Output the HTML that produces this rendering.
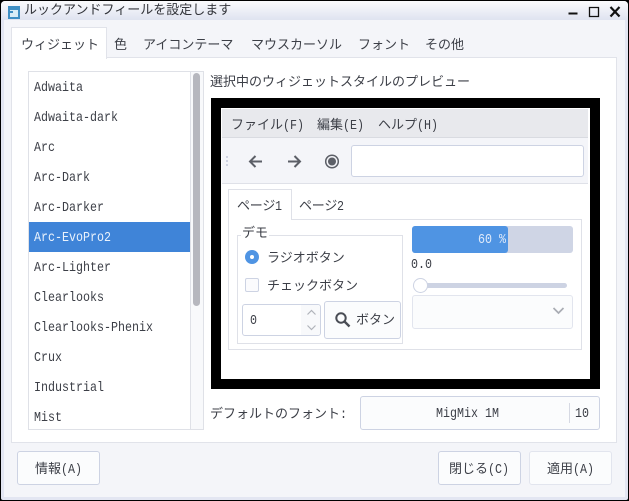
<!DOCTYPE html>
<html lang="ja"><head><meta charset="utf-8"><title>ルックアンドフィールを設定します</title>
<style>
*{box-sizing:border-box}
html,body{margin:0;padding:0;width:629px;height:501px;overflow:hidden;background:#000}
body{position:relative;font:13px/20px "Liberation Sans","Noto Sans CJK JP",sans-serif;color:#3c3f47}
.a,.t{position:absolute}
.t{white-space:nowrap;height:20px;line-height:20px;margin-top:1px}
.m{display:inline-block;font-family:"Liberation Mono",monospace;font-size:14px;letter-spacing:0;transform:scaleX(.833);transform-origin:0 50%}
.btn{position:absolute;background:#fbfcfd;border:1px solid #cdd3e3;border-radius:3px}
.btn.l{border-color:#e2e5ee}
</style></head><body>
<div class="a" style="left:1px;top:1px;width:627px;height:499px;background:#e3e6f2;border-radius:4px 4px 2px 2px"></div>
<div class="a" style="left:1px;top:1px;width:627px;height:19px;background:linear-gradient(#fbfbfd,#dfe3f0);border-radius:4px 4px 0 0"></div>
<div class="a" style="left:4px;top:20px;width:621px;height:477px;background:#f4f5f9"></div>
<div class="a" style="left:8px;top:6px;width:12px;height:13px;background:#3f8fc4"></div>
<div class="a" style="left:10px;top:10px;width:8px;height:7px;background:#d9edf7"></div>
<div class="a" style="left:10px;top:11px;width:3px;height:2px;background:#3f8fc4"></div>
<div class="t" style="left:24px;top:-1px;color:#33353b">ルックアンドフィールを設定します</div>
<svg class="a" style="left:560px;top:0" width="69" height="20" fill="none" stroke="#111"><path d="M8.500 13.500h9" stroke-width="2"/><path d="M29.500 7.500h9v9h-9z" stroke-width="1.300"/><path d="M50.500 7l9 9.500M59.500 7l-9 9.500" stroke-width="2.200"/></svg>

<!-- tabs -->
<div class="a" style="left:11px;top:57px;width:606px;height:386px;background:#fff;border:1px solid #e1e3ea"></div>
<div class="a" style="left:11px;top:27px;width:96px;height:32px;background:#fff;border:1px solid #e1e3ea;border-bottom:0"></div>
<div class="t" style="left:21px;top:34px">ウィジェット</div>
<div class="t" style="left:114px;top:34px">色</div>
<div class="t" style="left:143px;top:34px">アイコンテーマ</div>
<div class="t" style="left:251px;top:34px">マウスカーソル</div>
<div class="t" style="left:358px;top:34px">フォント</div>
<div class="t" style="left:425px;top:34px">その他</div>

<!-- list -->
<div class="a" style="left:28px;top:71px;width:176px;height:359px;background:#fff;border:1px solid #dfe1e7"></div>
<div class="a" style="left:190px;top:72px;width:13px;height:357px;background:#f8f9fb;border-left:1px solid #dfe1e7"></div>
<div class="a" style="left:193px;top:73px;width:7px;height:233px;background:#b6b7be;border-radius:4px"></div>
<div class="a" style="left:29px;top:222px;width:161px;height:30px;background:#3f84d8"></div>
<div class="t m" style="left:34px;top:77px">Adwaita</div>
<div class="t m" style="left:34px;top:107px">Adwaita-dark</div>
<div class="t m" style="left:34px;top:137px">Arc</div>
<div class="t m" style="left:34px;top:167px">Arc-Dark</div>
<div class="t m" style="left:34px;top:197px">Arc-Darker</div>
<div class="t m" style="left:34px;top:227px;color:#eaf2fc">Arc-EvoPro2</div>
<div class="t m" style="left:34px;top:257px">Arc-Lighter</div>
<div class="t m" style="left:34px;top:287px">Clearlooks</div>
<div class="t m" style="left:34px;top:317px">Clearlooks-Phenix</div>
<div class="t m" style="left:34px;top:347px">Crux</div>
<div class="t m" style="left:34px;top:377px">Industrial</div>
<div class="t m" style="left:34px;top:407px">Mist</div>

<div class="t" style="left:210px;top:71px">選択中のウィジェットスタイルのプレビュー</div>

<!-- preview -->
<div class="a" style="left:211px;top:98px;width:389px;height:291px;background:#fff;border:10px solid #000"></div>
<div class="a" style="left:222px;top:109px;width:366px;height:29px;background:#e8e9ed;border-bottom:1px solid #d9dbe1"></div>
<div class="t" style="left:231px;top:114px">ファイル<span class="m">(F)</span></div>
<div class="t" style="left:317px;top:114px">編集<span class="m">(E)</span></div>
<div class="t" style="left:378px;top:114px">ヘルプ<span class="m">(H)</span></div>
<div class="a" style="left:222px;top:138px;width:366px;height:46px;background:#f4f5f9;border-bottom:1px solid #dfe1e8"></div>
<svg class="a" style="left:222px;top:138px" width="130" height="46" fill="none"><path d="M5 18v2M5 22v2M5 26v2" stroke="#cfd3e2" stroke-width="2"/><path d="M40 23.500H28M33.500 18l-5.500 5.500 5.500 5.500M66 23.500h12M72.500 18l5.500 5.500-5.500 5.500" stroke="#5c5f67" stroke-width="2"/><circle cx="110" cy="23.500" r="6.300" stroke="#5c5f67" stroke-width="1.500"/><circle cx="110" cy="23.500" r="4" fill="#5c5f67"/></svg>
<div class="btn" style="left:351px;top:145px;width:233px;height:32px;background:#fff"></div>

<div class="a" style="left:228px;top:219px;width:354px;height:131px;border:1px solid #dfe1e8"></div>
<div class="a" style="left:228px;top:189px;width:64px;height:31px;background:#fff;border:1px solid #dfe1e8;border-bottom:0"></div>
<div class="t" style="left:237px;top:195px;letter-spacing:-.2px">ページ<span class="m">1</span></div>
<div class="t" style="left:299px;top:195px;letter-spacing:-.2px">ページ<span class="m">2</span></div>

<div class="a" style="left:237px;top:235px;width:166px;height:109px;border:1px solid #dfe1e8"></div>
<div class="t" style="left:241px;top:223px;background:#fff;padding:0 1px;height:16px;line-height:18px;overflow:visible">デモ</div>
<div class="a" style="left:245px;top:250px;width:14px;height:14px;border-radius:50%;background:#4f94e3"></div>
<div class="a" style="left:250px;top:255px;width:4px;height:4px;border-radius:50%;background:#fff"></div>
<div class="t" style="left:267px;top:247px">ラジオボタン</div>
<div class="a" style="left:245px;top:278px;width:14px;height:14px;border:1px solid #cdd3e3;border-radius:2px;background:#fbfbfd"></div>
<div class="t" style="left:267px;top:275px">チェックボタン</div>

<div class="btn" style="left:242px;top:304px;width:79px;height:32px;background:#fff"></div>
<div class="a" style="left:301px;top:305px;width:19px;height:30px;background:#f8f9fb;border-radius:0 3px 3px 0"></div>
<svg class="a" style="left:301px;top:305px" width="20" height="30" fill="none" stroke="#b0b3ba" stroke-width="1.200"><path d="M6.500 9.500l4-4 4 4M6.500 20.500l4 4 4-4"/></svg>
<div class="t m" style="left:250px;top:310px">0</div>
<div class="btn" style="left:324px;top:301px;width:77px;height:38px"></div>
<svg class="a" style="left:334px;top:311px" width="18" height="18" fill="none" stroke="#4a4d55"><circle cx="7" cy="7" r="4.700" stroke-width="2"/><path d="M10.500 10.500l5 5" stroke-width="2.400"/></svg>
<div class="t" style="left:356px;top:309px">ボタン</div>

<div class="a" style="left:412px;top:226px;width:161px;height:27px;background:#cfd5e5;border-radius:3px"></div>
<div class="a" style="left:412px;top:226px;width:96px;height:27px;background:#4f94e3;border-radius:3px"></div>
<div class="t m" style="left:478px;top:229px;color:#dfeafa">60 %</div>
<div class="t m" style="left:411px;top:254px">0.0</div>
<div class="a" style="left:420px;top:283px;width:147px;height:5px;background:#cdd3e3;border-radius:3px"></div>
<div class="a" style="left:413px;top:278px;width:15px;height:15px;background:#fff;border:1px solid #cdd3e3;border-radius:50%"></div>
<div class="btn l" style="left:412px;top:295px;width:161px;height:34px"></div>
<svg class="a" style="left:552px;top:306px" width="13" height="10" fill="none" stroke="#a9acb4" stroke-width="1.700"><path d="M1.500 2l5 5 5-5"/></svg>

<!-- font row -->
<div class="t" style="left:210px;top:403px">デフォルトのフォント<span class="m">:</span></div>
<div class="btn" style="left:360px;top:396px;width:240px;height:34px"></div>
<div class="a" style="left:569px;top:403px;width:1px;height:20px;background:#d6d9e3"></div>
<div class="t m" style="left:436px;top:403px">MigMix 1M</div>
<div class="t m" style="left:575px;top:403px">10</div>

<!-- bottom -->
<div class="btn" style="left:17px;top:451px;width:83px;height:34px"></div>
<div class="t" style="left:35px;top:458px">情報<span class="m">(A)</span></div>
<div class="btn" style="left:438px;top:451px;width:83px;height:34px"></div>
<div class="t" style="left:449px;top:458px">閉じる<span class="m">(C)</span></div>
<div class="btn l" style="left:529px;top:451px;width:83px;height:34px"></div>
<div class="t" style="left:547px;top:458px">適用<span class="m">(A)</span></div>
</body></html>
